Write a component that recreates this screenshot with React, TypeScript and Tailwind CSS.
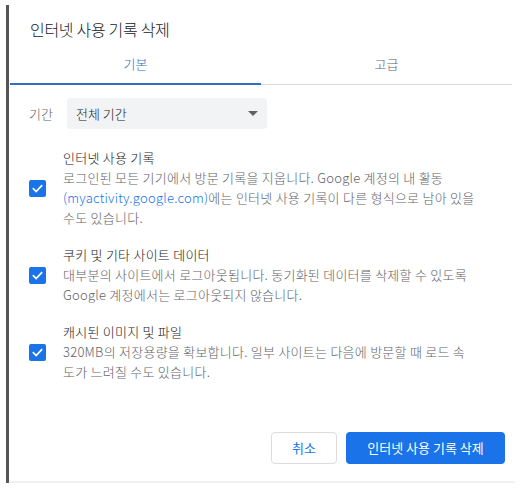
import React from "react";

const font = { fontFamily: '"Noto Sans CJK KR", "Noto Sans", sans-serif' };

function Check() {
  return (
    <div className="w-[17px] h-[17px] rounded-[2px] bg-[#1a73e8] flex items-center justify-center shrink-0">
      <svg width="13" height="13" viewBox="0 0 24 24" fill="none">
        <path d="M4.5 12.5l5 5L19.5 7" stroke="white" strokeWidth="3.2" strokeLinecap="square" />
      </svg>
    </div>
  );
}

function Section({ title, lines }: { title: string; lines: React.ReactNode[] }) {
  return (
    <div className="flex items-center">
      <div className="w-[53px] pl-[19px] flex">
        <Check />
      </div>
      <div className="flex flex-col text-[13px] leading-[20px] whitespace-nowrap tracking-[0.25px]">
        <div className="text-[#202124]">{title}</div>
        {lines.map((l, i) => (
          <div key={i} className="text-[#5f6368]">{l}</div>
        ))}
      </div>
    </div>
  );
}

export default function App() {
  return (
    <div className="w-[525px] h-[492px] bg-white flex font-light" style={font}>
      <div className="w-[6px] shrink-0" />
      <div className="w-[3px] shrink-0 bg-[#555555] mt-[5px] h-[478px]" />
      <div className="w-[1px] shrink-0" />
      <div className="w-[505px] h-[483px] border-b-[2px] border-[#f0f0f0] flex flex-col">
        <div className="pl-[20px] pt-[18px] text-[16px] leading-[22px] text-[#202124] tracking-[-0.3px]">
          인터넷 사용 기록 삭제
        </div>
        <div className="mt-[4px] flex w-[502px] h-[41px]">
          <div className="flex-1 flex items-center justify-center border-b-[2px] border-[#2f6fc4] text-[13px] text-[#2f6fc4]">
            기본
          </div>
          <div className="flex-1 flex items-center justify-center border-b border-[#dadce0] text-[13px] text-[#5f6368]">
            고급
          </div>
        </div>
        <div className="mt-[13px] flex items-center pl-[19px]">
          <span className="text-[13px] text-[#5f6368] w-[38px]">기간</span>
          <div className="w-[200px] h-[31px] rounded-[4px] bg-[#f1f3f4] flex items-center justify-between pl-[9px] pr-[9px] text-[13px] text-[#202124]">
            <span>전체 기간</span>
            <svg width="10" height="5" viewBox="0 0 10 5">
              <path d="M0 0h10L5 5z" fill="#5f6368" />
            </svg>
          </div>
        </div>
        <div className="mt-[19px] flex flex-col gap-[17px]">
          <Section
            title="인터넷 사용 기록"
            lines={[
              "로그인된 모든 기기에서 방문 기록을 지웁니다. Google 계정의 내 활동",
              <>
                <span className="text-[#1a73e8]">(myactivity.google.com)</span>에는 인터넷 사용 기록이 다른 형식으로 남아 있을
              </>,
              "수도 있습니다.",
            ]}
          />
          <Section
            title="쿠키 및 기타 사이트 데이터"
            lines={[
              "대부분의 사이트에서 로그아웃됩니다. 동기화된 데이터를 삭제할 수 있도록",
              "Google 계정에서는 로그아웃되지 않습니다.",
            ]}
          />
          <Section
            title="캐시된 이미지 및 파일"
            lines={[
              "320MB의 저장용량을 확보합니다. 일부 사이트는 다음에 방문할 때 로드 속",
              "도가 느려질 수도 있습니다.",
            ]}
          />
        </div>
        <div className="mt-auto mb-[17px] flex justify-end gap-[9px] pr-[10px]">
          <button className="w-[66px] h-[32px] rounded-[4px] border border-[#dadce0] bg-white text-[13px] text-[#1a73e8] font-normal">
            취소
          </button>
          <button className="w-[159px] h-[32px] rounded-[4px] bg-[#1a73e8] text-[13px] text-white font-normal">
            인터넷 사용 기록 삭제
          </button>
        </div>
      </div>
    </div>
  );
}
